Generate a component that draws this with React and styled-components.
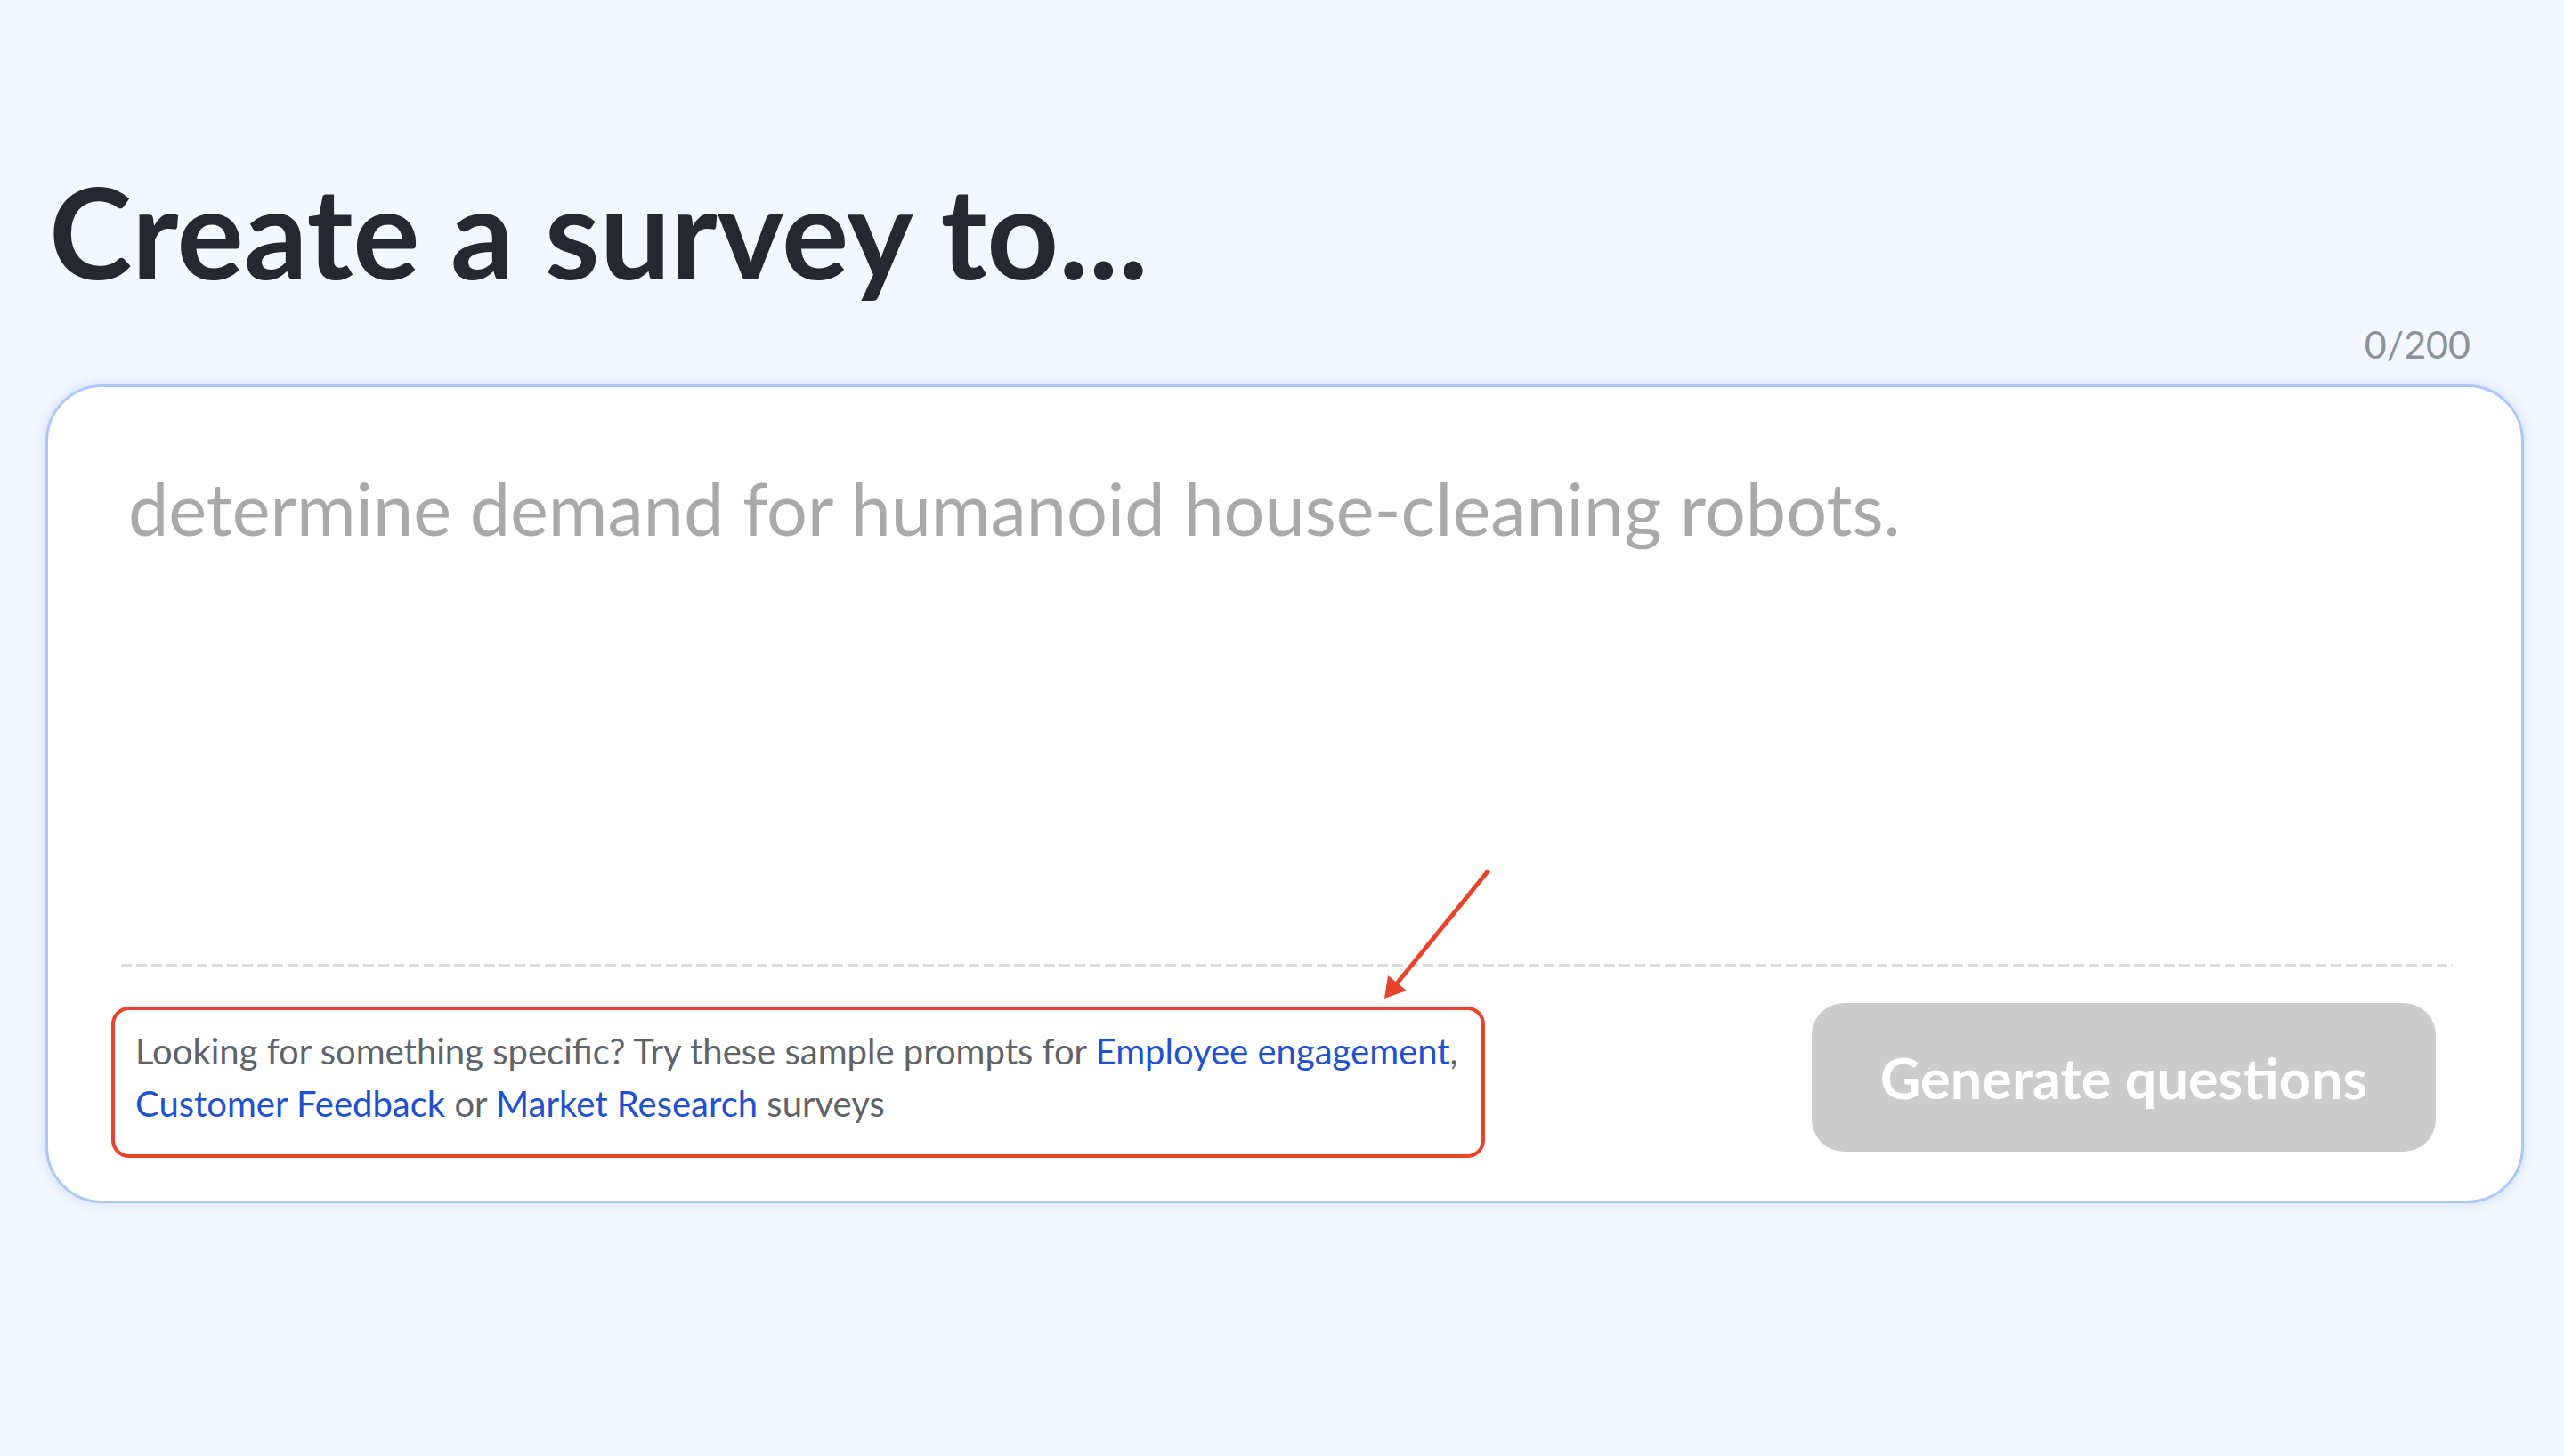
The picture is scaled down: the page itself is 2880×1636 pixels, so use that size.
import styled, { createGlobalStyle } from 'styled-components'

const GlobalStyles = createGlobalStyle`
  html, body {
    margin: 0;
    padding: 0;
    background: #f3f7fe;
  }
  body {
    font-family: Lato, 'Liberation Sans', sans-serif;
  }
`

const Page = styled.main`
  min-height: 1636px;
  box-sizing: border-box;
  padding: 189px 45px 0 51px;
`

const Title = styled.h1`
  margin: 0 0 0 4px;
  font-size: 141px;
  line-height: 1;
  font-weight: 700;
  color: #25292f;
`

const Counter = styled.div`
  margin: 35px 60px 24px 0;
  text-align: right;
  font-size: 43px;
  line-height: 1;
  color: #8e9196;
`

const Card = styled.section`
  position: relative;
  height: 920px;
  box-sizing: border-box;
  display: flex;
  flex-direction: column;
  padding: 0 77px 0 82px;
  background: #fff;
  border: 3px solid #adc7f7;
  border-radius: 64px;
  box-shadow: 0 0 12px rgba(110, 150, 240, 0.3);
`

const Prompt = styled.textarea`
  height: 648px;
  box-sizing: border-box;
  padding: 87px 0 0 8px;
  border: none;
  outline: none;
  resize: none;
  background: transparent;
  font-family: inherit;
  font-size: 81px;
  line-height: 1.2;
  color: #25292f;
  &::placeholder {
    color: #a9a9a9;
  }
`

const Divider = styled.div`
  height: 3px;
  background: repeating-linear-gradient(to right, #dcdcdc 0 12px, transparent 12px 17px);
`

const Footer = styled.div`
  flex: 1;
  display: flex;
  align-items: center;
  justify-content: space-between;
  padding: 41px 19px 55px 16px;
`

const Hint = styled.p`
  position: relative;
  margin: 0;
  font-size: 40px;
  line-height: 59px;
  color: #5f636a;
  &::after {
    content: '';
    position: absolute;
    left: -27px;
    top: -21px;
    width: 1543px;
    height: 170px;
    box-sizing: border-box;
    border: 4px solid #e8432b;
    border-radius: 20px;
    pointer-events: none;
  }
`

const Link = styled.a`
  color: #2150d0;
  text-decoration: none;
  cursor: pointer;
`

const GenerateButton = styled.button`
  width: 701px;
  height: 167px;
  border: none;
  border-radius: 36px;
  background: #cccccc;
  color: #fff;
  font-family: inherit;
  font-size: 63px;
  font-weight: 700;
  cursor: not-allowed;
`

const Arrow = styled.svg`
  position: absolute;
  left: 1486px;
  top: 535px;
  overflow: visible;
`

function App() {
  return (
    <>
      <GlobalStyles />
      <Page>
        <Title>Create a survey to...</Title>
        <Counter>0/200</Counter>
        <Card>
          <Prompt placeholder="determine demand for humanoid house-cleaning robots." />
          <Divider />
          <Footer>
            <Hint>
              Looking for something specific? Try these sample prompts for{' '}
              <Link>Employee engagement</Link>,<br />
              <Link>Customer Feedback</Link> or <Link>Market Research</Link> surveys
            </Hint>
            <GenerateButton disabled>Generate questions</GenerateButton>
          </Footer>
          <Arrow width="140" height="160" viewBox="0 0 140 160">
            <line x1="132" y1="8" x2="29" y2="135" stroke="#e8432b" strokeWidth="5" />
            <polygon points="15,152 19,126 40,143" fill="#e8432b" />
          </Arrow>
        </Card>
      </Page>
    </>
  )
}

export default App
